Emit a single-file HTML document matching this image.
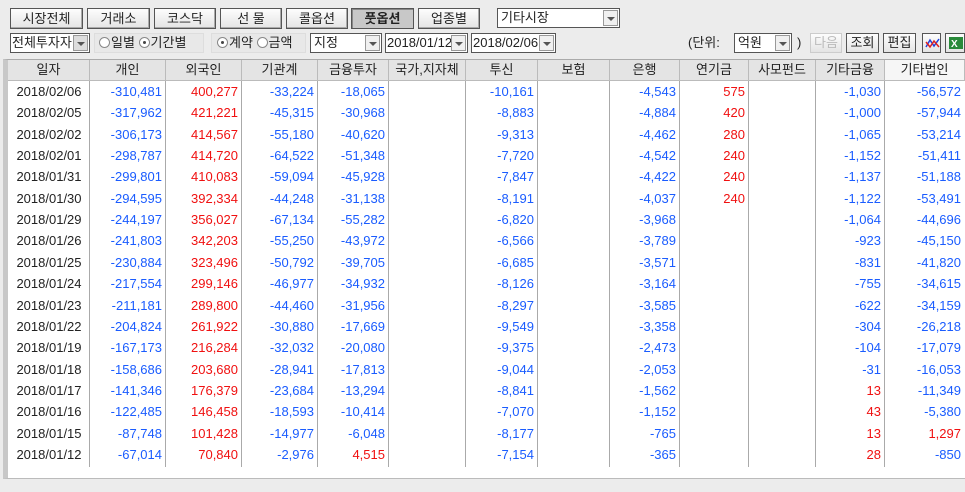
<!DOCTYPE html>
<html><head><meta charset="utf-8"><style>
*{box-sizing:border-box;margin:0;padding:0}
body{width:965px;height:492px;background:#ececec;font-family:"Liberation Sans","Noto Sans CJK KR","NanumGothic",sans-serif;font-size:12px;color:#222;position:relative;overflow:hidden}
.a{position:absolute}
.btn{position:absolute;top:8px;height:21px;border:1px solid #555;background:linear-gradient(#fdfdfd,#e4e4e4);text-align:center;line-height:19px;font-size:13px;box-shadow:inset -1px -1px 0 #aaa}
.btn.on{background:#c8c8c8;font-weight:bold;box-shadow:inset 1px 1px 0 #888}
.cb{position:absolute;height:20px;border:1px solid #555;background:#fff;line-height:18px;padding-left:3px;font-size:13px}
.cb i{position:absolute;right:1px;top:1px;width:15px;height:16px;border:1px solid #999;background:#f0f0f0}
.cb i:after{content:"";position:absolute;left:3px;top:6px;border:4px solid transparent;border-top:4px solid #555}
.grp{position:absolute;top:33px;height:20px;border:1px solid #ddd;background:#e8e8e8;line-height:18px;font-size:13px}
.r{display:inline-block;width:11px;height:11px;border:1px solid #888;border-radius:50%;background:#fff;vertical-align:-1px;position:relative;margin-right:1px}
.r.s:after{content:"";position:absolute;left:3px;top:3px;width:3px;height:3px;border-radius:50%;background:#444}
.sb{position:absolute;top:33px;height:20px;border:1px solid #555;background:linear-gradient(#fdfdfd,#e4e4e4);text-align:center;line-height:18px;font-size:13px}
#g{position:absolute;left:3px;top:59px;width:962px;height:420px;background:#fff;border-left:5px solid #c8c8c8;border-top:1px solid #aaa;border-bottom:1px solid #bbb}
.hd{position:absolute;top:0;height:21px;background:#e4e4e4;border-right:1px solid #bbb;border-bottom:1px solid #bbb;text-align:center;line-height:20px;font-size:13px}
.vl{position:absolute;top:21px;height:386px;width:1px;background:#aaa}
.row{position:absolute;left:0;height:21px;line-height:21px;font-size:13px}
.row span{position:absolute;text-align:right;padding-right:4px}
.b{color:#1a5cff}.rd{color:#f01010}
</style></head><body>
<div class="btn" style="left:10px;width:73px">시장전체</div>
<div class="btn" style="left:87px;width:63px">거래소</div>
<div class="btn" style="left:154px;width:62px">코스닥</div>
<div class="btn" style="left:220px;width:62px">선 물</div>
<div class="btn" style="left:286px;width:62px">콜옵션</div>
<div class="btn on" style="left:351px;width:63px">풋옵션</div>
<div class="btn" style="left:418px;width:62px">업종별</div>
<div class="cb" style="left:497px;top:8px;width:123px">기타시장<i></i></div>
<div class="cb" style="left:10px;top:33px;width:80px;padding-left:1px">전체투자자<i style="background:#ddd"></i></div>
<div class="grp" style="left:94px;width:110px;padding-left:4px"><span class="r"></span>일별 <span class="r s"></span>기간별</div>
<div class="grp" style="left:211px;width:95px;padding-left:5px"><span class="r s"></span>계약 <span class="r"></span>금액</div>
<div class="cb" style="left:310px;top:33px;width:72px">지정<i></i></div>
<div class="cb" style="left:385px;top:33px;width:83px;padding-left:1px">2018/01/12<i></i></div>
<div class="cb" style="left:471px;top:33px;width:85px;padding-left:1px">2018/02/06<i></i></div>
<div class="a" style="left:688px;top:35px;font-size:13px;line-height:16px">(단위:</div>
<div class="cb" style="left:734px;top:33px;width:58px">억원<i></i></div>
<div class="a" style="left:797px;top:35px;font-size:13px;line-height:16px">)</div>
<div class="sb" style="left:810px;width:32px;color:#bbb;border-color:#ccc">다음</div>
<div class="sb" style="left:846px;width:33px">조회</div>
<div class="sb" style="left:883px;width:33px">편집</div>
<div class="sb" style="left:922px;width:19px;padding:2px"><svg width="15" height="14"><path d="M1 11 L5 4 L9 10 L14 3" stroke="#2040e0" fill="none" stroke-width="1.5"/><path d="M1 6 L5 11 L9 5 L14 11" stroke="#e02020" fill="none" stroke-width="1.5"/></svg></div>
<div class="sb" style="left:945px;width:20px;padding:2px"><svg width="16" height="14"><rect x="1" y="1" width="14" height="12" fill="#2a8a3a"/><text x="3" y="11" fill="#fff" font-size="10" font-weight="bold" font-family="Liberation Sans">X</text></svg></div>
<div id="g">
<div class="hd" style="left:0;width:82px">일자</div>
<div class="hd" style="left:82px;width:76px">개인</div>
<div class="hd" style="left:158px;width:76px">외국인</div>
<div class="hd" style="left:234px;width:76px">기관계</div>
<div class="hd" style="left:310px;width:71px">금융투자</div>
<div class="hd" style="left:381px;width:77px">국가,지자체</div>
<div class="hd" style="left:458px;width:72px">투신</div>
<div class="hd" style="left:530px;width:72px">보험</div>
<div class="hd" style="left:602px;width:70px">은행</div>
<div class="hd" style="left:672px;width:69px">연기금</div>
<div class="hd" style="left:741px;width:67px">사모펀드</div>
<div class="hd" style="left:808px;width:69px">기타금융</div>
<div class="hd" style="left:877px;width:80px;background:#f6f6f6">기타법인</div>
<div class="vl" style="left:81px"></div><div class="vl" style="left:157px"></div><div class="vl" style="left:233px"></div><div class="vl" style="left:309px"></div><div class="vl" style="left:380px"></div><div class="vl" style="left:457px"></div><div class="vl" style="left:529px"></div><div class="vl" style="left:601px"></div><div class="vl" style="left:671px"></div><div class="vl" style="left:740px"></div><div class="vl" style="left:807px"></div><div class="vl" style="left:876px"></div>
<div id="rows"></div>
</div>
<script>
var d=[
["2018/02/06","-310,481","400,277","-33,224","-18,065","-10,161","-4,543","575","-1,030","-56,572"],
["2018/02/05","-317,962","421,221","-45,315","-30,968","-8,883","-4,884","420","-1,000","-57,944"],
["2018/02/02","-306,173","414,567","-55,180","-40,620","-9,313","-4,462","280","-1,065","-53,214"],
["2018/02/01","-298,787","414,720","-64,522","-51,348","-7,720","-4,542","240","-1,152","-51,411"],
["2018/01/31","-299,801","410,083","-59,094","-45,928","-7,847","-4,422","240","-1,137","-51,188"],
["2018/01/30","-294,595","392,334","-44,248","-31,138","-8,191","-4,037","240","-1,122","-53,491"],
["2018/01/29","-244,197","356,027","-67,134","-55,282","-6,820","-3,968","","-1,064","-44,696"],
["2018/01/26","-241,803","342,203","-55,250","-43,972","-6,566","-3,789","","-923","-45,150"],
["2018/01/25","-230,884","323,496","-50,792","-39,705","-6,685","-3,571","","-831","-41,820"],
["2018/01/24","-217,554","299,146","-46,977","-34,932","-8,126","-3,164","","-755","-34,615"],
["2018/01/23","-211,181","289,800","-44,460","-31,956","-8,297","-3,585","","-622","-34,159"],
["2018/01/22","-204,824","261,922","-30,880","-17,669","-9,549","-3,358","","-304","-26,218"],
["2018/01/19","-167,173","216,284","-32,032","-20,080","-9,375","-2,473","","-104","-17,079"],
["2018/01/18","-158,686","203,680","-28,941","-17,813","-9,044","-2,053","","-31","-16,053"],
["2018/01/17","-141,346","176,379","-23,684","-13,294","-8,841","-1,562","","13","-11,349"],
["2018/01/16","-122,485","146,458","-18,593","-10,414","-7,070","-1,152","","43","-5,380"],
["2018/01/15","-87,748","101,428","-14,977","-6,048","-8,177","-765","","13","1,297"],
["2018/01/12","-67,014","70,840","-2,976","4,515","-7,154","-365","","28","-850"]];
var x=[[0,82],[82,158],[158,234],[234,310],[310,381],[458,530],[602,672],[672,741],[808,877],[877,957]];
var h="";
d.forEach(function(r,i){h+='<div class="row" style="top:'+(21+i*21.35)+'px">';
r.forEach(function(v,j){var c=j==0?'':(v.charAt(0)=='-'?'b':'rd');var st=j==0?'text-align:center;padding:0;':'';
h+='<span class="'+c+'" style="'+st+'left:'+x[j][0]+'px;width:'+(x[j][1]-x[j][0])+'px">'+v+'</span>';});h+='</div>';});
document.getElementById('rows').innerHTML=h;
</script>
</body></html>
